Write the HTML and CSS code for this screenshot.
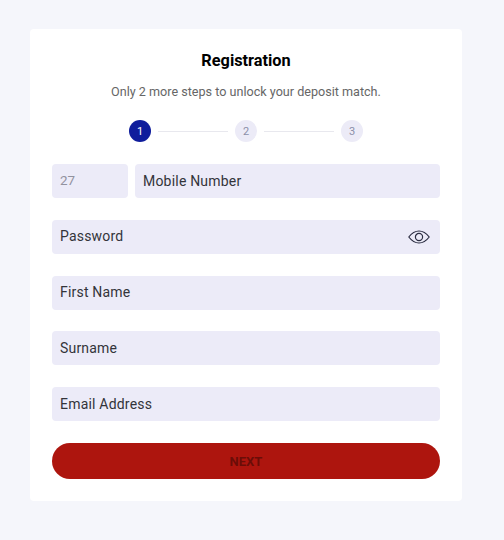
FILE: index.html
```html
<!DOCTYPE html>
<html lang="en">
<head>
<meta charset="utf-8">
<title>Registration</title>
<link rel="stylesheet" href="styles.css">
</head>
<body>
<main class="card">
  <h1 class="title">Registration</h1>
  <p class="subtitle">Only 2 more steps to unlock your deposit match.</p>
  <div class="steps">
    <span class="step step-active">1</span>
    <span class="step-line"></span>
    <span class="step">2</span>
    <span class="step-line"></span>
    <span class="step">3</span>
  </div>
  <form class="form">
    <div class="row">
      <div class="field field-code">27</div>
      <div class="field field-grow">Mobile Number</div>
    </div>
    <div class="field field-pass">
      <span>Password</span>
      <svg class="eye" width="22" height="14" viewBox="0 0 22 14" fill="none" stroke="#2b2d42" stroke-width="1.2">
        <path d="M0.8 7C4 2.8 7.3 1 11 1s7 1.8 10.2 6C18 11.2 14.700 13 11 13S4 11.200 0.800 7Z"/>
        <circle cx="11" cy="7" r="3.600"/>
      </svg>
    </div>
    <div class="field">First Name</div>
    <div class="field">Surname</div>
    <div class="field">Email Address</div>
    <button class="next" type="button">NEXT</button>
  </form>
</main>
</body>
</html>
```
FILE: styles.css
```css
* { box-sizing: border-box; }
html, body { margin: 0; height: 100%; }
body {
  background: #f5f6fb;
  font-family: Roboto, "Liberation Sans", sans-serif;
  padding: 29px 42px 39px 30px;
}
.card {
  width: 432px;
  height: 472px;
  background: #fff;
  border-radius: 4px;
  padding: 22px;
}
.title {
  margin: 0;
  font-size: 16.3px;
  line-height: 19px;
  font-weight: 700;
  color: #000;
  text-align: center;
}
.subtitle {
  margin: 13px 0 0;
  font-size: 12.6px;
  line-height: 17px;
  color: #666;
  text-align: center;
}
.steps {
  margin-top: 20px;
  display: flex;
  justify-content: center;
  align-items: center;
  gap: 7px;
}
.step {
  width: 22px;
  height: 22px;
  border-radius: 50%;
  background: #ecebf7;
  color: #8b8fa8;
  font-size: 11px;
  display: flex;
  align-items: center;
  justify-content: center;
}
.step-active { background: #0f1d9c; color: #fff; }
.step-line { width: 70px; height: 1px; background: #e8e8ee; }
.form {
  margin-top: 22px;
  display: flex;
  flex-direction: column;
  gap: 21.75px;
}
.row { display: flex; gap: 7px; }
.field {
  height: 34px;
  background: #ecebf8;
  border-radius: 4px;
  padding: 0 8px 0.6px;
  display: flex;
  align-items: center;
  font-size: 14px;
  letter-spacing: 0.2px;
  color: #33343a;
}
.field-code { width: 76px; color: #92929f; font-size: 13.4px; letter-spacing: 0; }
.field-grow { flex: 1; }
.field-pass { justify-content: space-between; padding-right: 10px; }
.eye { display: block; margin-top: 1px; }
.next {
  height: 36px;
  border: 0;
  border-radius: 18px;
  background: #ad150e;
  color: #6b0d08;
  font-family: inherit;
  font-size: 13px;
  font-weight: 700;
  padding: 1px 0 0;
}
```
